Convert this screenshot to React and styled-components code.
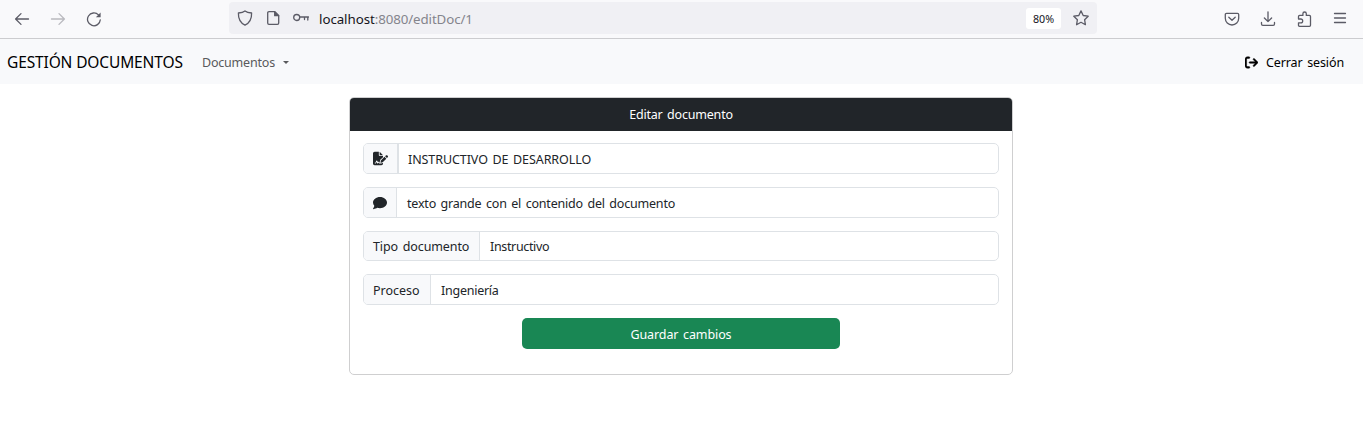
import React from "react";
import styled, { createGlobalStyle } from "styled-components";
import { FaFileSignature, FaComment, FaArrowRightFromBracket } from "react-icons/fa6";

const GlobalStyle = createGlobalStyle`
  * { box-sizing: border-box; }
  body {
    margin: 0;
    background: #fff;
    color: #212529;
    font: 12.8px/19px "Noto Sans", "Open Sans", sans-serif;
    overflow: hidden;
  }
`;

const Label = styled.span`
  font-size: ${(p) => p.$size || 12.5}px;
  letter-spacing: ${(p) => p.$track || 0}px;
  word-spacing: ${(p) => p.$word || 0}px;
  color: ${(p) => p.$color || "inherit"};
  white-space: nowrap;
`;

const Toolbar = styled.header`
  display: flex;
  height: 39px;
  padding: 2px 15px 0 14px;
  background: #f9f9fb;
  border-bottom: 1px solid #cccccf;
  color: #5b5b66;
`;

const ToolGroup = styled.div`
  display: flex;
  align-items: center;
  height: 33px;
  gap: ${(p) => p.$gap}px;
  margin-left: ${(p) => p.$left || 0}px;
`;

const AddressBar = styled.div`
  display: flex;
  align-items: center;
  width: 868px;
  height: 32px;
  margin-left: 127px;
  padding: 0 8px;
  border-radius: 4px;
  background: #f0f0f4;
`;

const Address = styled.div`
  flex: 1;
  margin-left: 10px;
  padding-top: 2px;
  color: #15141a;
`;

const Zoom = styled.div`
  display: grid;
  place-items: center;
  width: 35px;
  height: 21px;
  margin: 1px 12px 0 0;
  padding-top: 1px;
  border-radius: 3px;
  background: #fff;
  color: #15141a;
`;

const Glyph = styled.svg`
  display: block;
  flex: none;
  width: 16px;
  height: 16px;
  fill: none;
  stroke: currentColor;
  stroke-width: 1.3;
  stroke-linecap: round;
  stroke-linejoin: round;
  opacity: ${(p) => (p.$dim ? 0.4 : 1)};
  margin-left: ${(p) => p.$left || 0}px;
`;

const Navbar = styled.nav`
  display: flex;
  align-items: center;
  height: 45px;
  padding: 2px 19px 0 7px;
  background: #f8f9fb;
`;

const Brand = styled.div`
  width: 195px;
  color: #000;
`;

const Dropdown = styled.div`
  display: flex;
  align-items: center;
  gap: 8px;
  color: #595a5c;
`;

const Caret = styled.i`
  border: 3.5px solid transparent;
  border-top-color: currentColor;
  border-bottom: 0;
`;

const Logout = styled.div`
  display: flex;
  align-items: center;
  gap: 8px;
  margin-left: auto;
  color: #000;

  svg {
    stroke: currentColor;
    stroke-width: 18px;
  }
`;

const Card = styled.main`
  width: 664px;
  height: 278px;
  margin: 13px 0 0 349px;
  border: 1px solid #cfcfd0;
  border-radius: 5px;
  overflow: hidden;
`;

const CardHeader = styled.div`
  height: 33px;
  padding-top: 7px;
  text-align: center;
  background: #212529;
  color: #fff;
`;

const Form = styled.form`
  display: flex;
  flex-direction: column;
  gap: 13px;
  padding: 12px 13px;
`;

const InputGroup = styled.div`
  display: flex;
  height: ${(p) => p.$height || 31}px;
  border: 1px solid #dee2e6;
  border-radius: 5px;
  overflow: hidden;
`;

const Addon = styled.div`
  display: flex;
  align-items: center;
  width: ${(p) => p.$width}px;
  padding: ${(p) => p.$top || 0}px 0 0 9px;
  border-right: ${(p) => p.$edge || 1}px solid #dee2e6;
  background: #f8f9fb;
`;

const Value = styled.div`
  display: flex;
  align-items: center;
  padding: 1px 0 0 ${(p) => p.$left || 10}px;
`;

const Submit = styled.button`
  align-self: center;
  width: 318px;
  height: 31px;
  padding: 1px 0 0;
  border: 0;
  border-radius: 5px;
  background: #198754;
  color: #fff;
  font: inherit;
`;

function App() {
  return (
    <>
      <GlobalStyle />
      <Toolbar>
        <ToolGroup $gap={20}>
          <Glyph viewBox="0 0 16 16"><path d="M14.5 8H1.8M7 2.6 1.6 8 7 13.4" /></Glyph>
          <Glyph viewBox="0 0 16 16" $dim><path d="M1.5 8h12.7M9 2.6 14.4 8 9 13.4" /></Glyph>
          <Glyph viewBox="0 0 16 16">
            <path d="M14.3 8.8A6.4 6.4 0 1 1 12.5 3.9" />
            <path d="M14.6 1.6v4.7H9.9z" fill="currentColor" stroke="none" />
          </Glyph>
        </ToolGroup>
        <AddressBar>
          <Glyph viewBox="0 0 16 16"><path d="M8 .9C6.200 2.400 4 2.800 1.400 3c-.2 5.500 1.300 9.600 6.600 12.100C13.300 12.600 14.800 8.500 14.600 3 12 2.800 9.800 2.400 8 .9z" /></Glyph>
          <Glyph viewBox="0 0 16 16" $left={12}>
            <path d="M4 1.700h5.700l4 4V13c0 .8-.5 1.300-1.300 1.300H4c-.8 0-1.300-.5-1.300-1.300V3c0-.8.5-1.300 1.300-1.300z" />
            <path d="M9.700 1.700v4h4z" fill="currentColor" />
          </Glyph>
          <Glyph viewBox="0 0 16 16" $left={12}><circle cx="3.700" cy="7.500" r="3" /><path d="M6.800 7h8.700M11.500 7v2.500M14.800 7v3" /></Glyph>
          <Address>
            <Label $size={13.3} $track={-0.05}>localhost</Label>
            <Label $size={13.3} $track={-0.1} $color="#84848c">:8080/editDoc/1</Label>
          </Address>
          <Zoom><Label $size={10.7}>80%</Label></Zoom>
          <Glyph viewBox="0 0 16 16"><path d="m8 .9 2.200 4.600 5 .7-3.600 3.500.8 5L8 12.300l-4.400 2.400.8-5L.8 6.200l5-.7z" /></Glyph>
        </AddressBar>
        <ToolGroup $gap={20} $left={127}>
          <Glyph viewBox="0 0 16 16"><path d="M2.500 2.400h11c.7 0 1.200.5 1.200 1.200v3.700a6.700 6.700 0 0 1-13.400 0V3.600c0-.7.5-1.200 1.200-1.200zM4.800 6.200 8 9.300l3.200-3.100" /></Glyph>
          <Glyph viewBox="0 0 16 16"><path d="M8 .8v9.700M4.400 7 8 10.600 11.600 7M1.500 11.500v1.600c0 .8.5 1.300 1.300 1.300h10.400c.8 0 1.300-.5 1.300-1.300v-1.600" /></Glyph>
          <Glyph viewBox="0 0 16 16"><path d="M2.500 7V5.500c0-.7.4-1.100 1.100-1.100h3.300V2.700a1.700 1.700 0 0 1 3.400 0v1.700h3.100c.7 0 1.100.4 1.100 1.100v8.700c0 .7-.4 1.100-1.100 1.100H3.600c-.7 0-1.100-.4-1.100-1.100v-2.400h2.300a1.900 1.900 0 0 0 0-3.800H2.500z" /></Glyph>
          <Glyph viewBox="0 0 16 16"><path d="M2.500 2.500h11M2.500 7h11M2.500 11.500h11" /></Glyph>
        </ToolGroup>
      </Toolbar>
      <Navbar>
        <Brand><Label $size={15.5} $track={-0.13}>GESTIÓN DOCUMENTOS</Label></Brand>
        <Dropdown><Label $track={-0.2}>Documentos</Label><Caret /></Dropdown>
        <Logout><FaArrowRightFromBracket size={13} /><Label $word={1.5} $track={-0.12}>Cerrar sesión</Label></Logout>
      </Navbar>
      <Card>
        <CardHeader><Label $word={1.5} $track={-0.2}>Editar documento</Label></CardHeader>
        <Form>
          <InputGroup>
            <Addon $width={35} $edge={2}><FaFileSignature size={15} /></Addon>
            <Value $left={9}><Label $word={1.5} $track={-0.08}>INSTRUCTIVO DE DESARROLLO</Label></Value>
          </InputGroup>
          <InputGroup>
            <Addon $width={33}><FaComment size={14} /></Addon>
            <Value><Label $word={1.5} $track={-0.2}>texto grande con el contenido del documento</Label></Value>
          </InputGroup>
          <InputGroup $height={30}>
            <Addon $width={116}><Label $word={1.5} $track={-0.1}>Tipo documento</Label></Addon>
            <Value><Label $track={-0.35}>Instructivo</Label></Value>
          </InputGroup>
          <InputGroup>
            <Addon $width={67} $top={1}><Label>Proceso</Label></Addon>
            <Value><Label $track={-0.25}>Ingeniería</Label></Value>
          </InputGroup>
          <Submit type="button"><Label $word={1.5} $track={-0.1}>Guardar cambios</Label></Submit>
        </Form>
      </Card>
    </>
  );
}

export default App;
